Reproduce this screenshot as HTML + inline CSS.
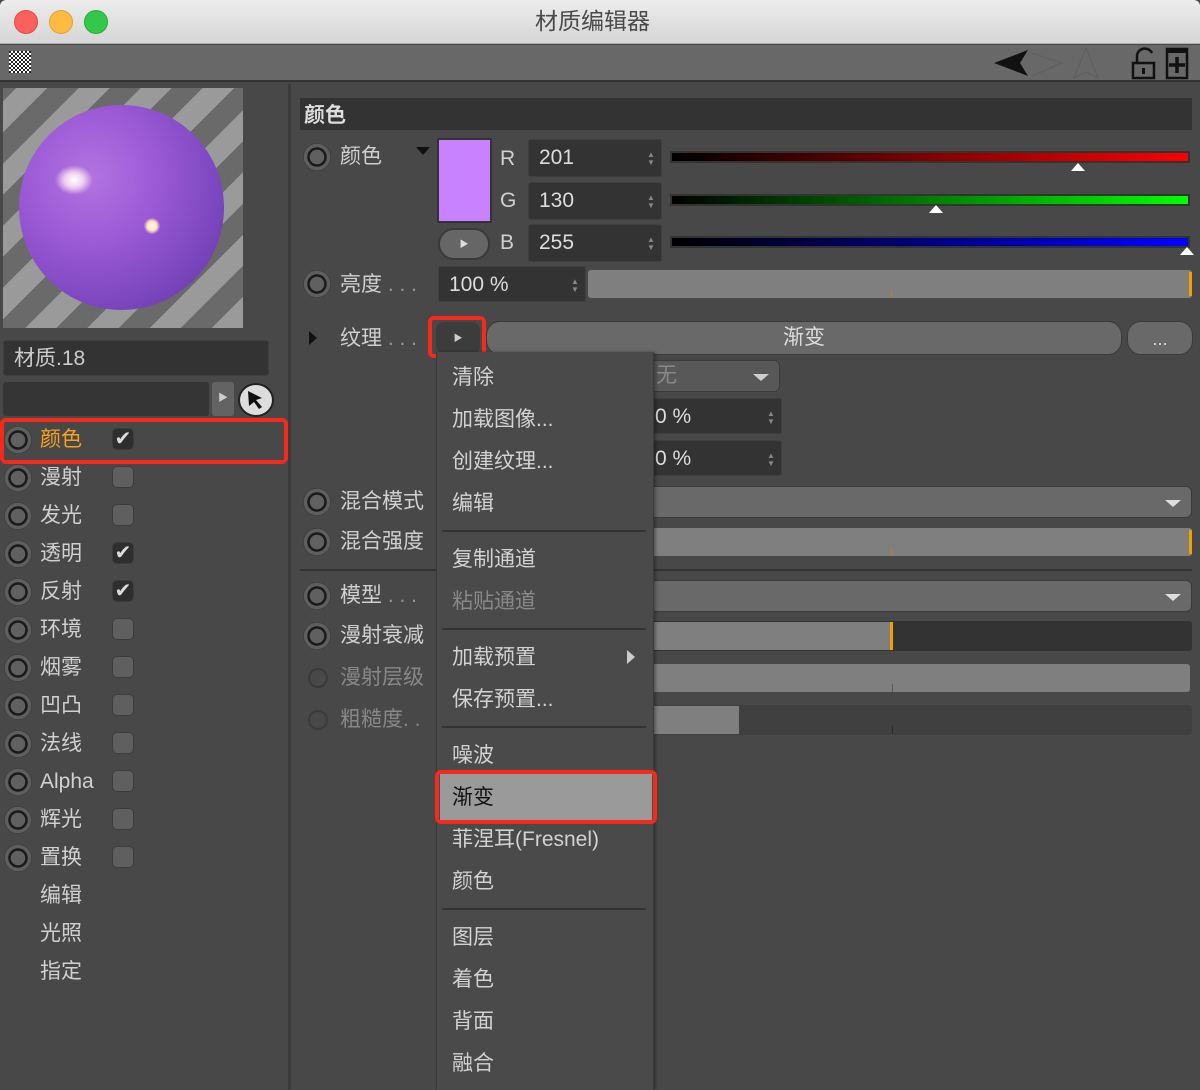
<!DOCTYPE html>
<html><head><meta charset="utf-8"><style>
*{margin:0;padding:0;box-sizing:border-box}
body{width:1200px;height:1090px;background:#484848;position:relative;overflow:hidden;font-family:"Liberation Sans","Noto Sans CJK SC",sans-serif;color:#d0d0d0}
.a{position:absolute}
.t{position:absolute;font-size:21px;line-height:24px;white-space:nowrap}
.rad{position:absolute;width:28px;height:28px;border-radius:50%;background:radial-gradient(circle at 50% 50%,#606060 0 7px,#1a1a1a 7.5px 9.5px,#5e5e5e 10px 13px,#3a3a3a 13.5px)}
.cb{position:absolute;width:22px;height:22px;border-radius:5px;background:#5f5f5f;border:1px solid #3c3c3c}
.cb.k{background:#2e2e2e;color:#ddd;font-size:20px;line-height:20px;text-align:center}
.fld{position:absolute;background:#333;border:1px solid #3e3e3e;border-radius:3px;font-size:21px;line-height:36px;padding-left:10px;color:#ddd}
.sp{position:absolute;right:6px;top:11px;width:8px;height:16px;color:#888;font-size:8px;line-height:8px}
.sld{position:absolute;background:#7f7f7f;border-radius:3px}
.dd{position:absolute;background:#696969;border-radius:6px;border:1px solid #3a3a3a}
.dd::after{content:"";position:absolute;right:10px;top:13px;border-left:8px solid transparent;border-right:8px solid transparent;border-top:7px solid #ddd}
.mi{position:absolute;left:452px;font-size:21px;line-height:24px;color:#d2d2d2}
.sep{position:absolute;left:442px;width:204px;height:2px;background:#333}
.red{position:absolute;border:4px solid #f42a1c;border-radius:6px}
</style></head><body>
<div class="a" style="left:0;top:0;width:1200px;height:44px;background:linear-gradient(#ececec,#d6d6d6);border-bottom:1px solid #b0b0b0;border-radius:6px 6px 0 0"></div>
<div class="a" style="left:14px;top:10px;width:24px;height:24px;border-radius:50%;background:#fc605c;border:1px solid #de4a44"></div>
<div class="a" style="left:49px;top:10px;width:24px;height:24px;border-radius:50%;background:#fdbc40;border:1px solid #dea236"></div>
<div class="a" style="left:84px;top:10px;width:24px;height:24px;border-radius:50%;background:#34c84a;border:1px solid #27aa35"></div>
<div class="t" style="left:535px;top:9px;font-size:23px;color:#4a4a4a">材质编辑器</div>
<div class="a" style="left:0;top:45px;width:1200px;height:37px;background:#686868;border-bottom:2px solid #333"></div>
<div class="a" style="left:9px;top:51px;width:22px;height:22px;background:repeating-conic-gradient(#fff 0 25%,#222 0 50%) 0 0/4px 4px"></div>
<svg class="a" style="left:990px;top:45px" width="210" height="37">
<path d="M4 18 L38 5 L30 18 L38 31 Z" fill="#111"/>
<path d="M42 8 L72 18 L42 31" fill="none" stroke="#5e5e5e" stroke-width="1"/>
<path d="M96 3 L108 33 L96 27 L84 33 Z" fill="none" stroke="#5e5e5e"/>
<rect x="143" y="18" width="21" height="15" fill="none" stroke="#111" stroke-width="2.5"/>
<path d="M147 18 V10 a8 8 0 0 1 15 -2" fill="none" stroke="#111" stroke-width="2.5"/>
<rect x="152" y="23" width="3" height="6" fill="#111"/>
<rect x="177" y="4" width="20" height="29" fill="none" stroke="#111" stroke-width="2.5"/>
<rect x="177" y="4" width="20" height="4" fill="#111"/>
<path d="M187 12 V28 M179 20 H195" stroke="#111" stroke-width="3.5"/>
</svg>
<div class="a" style="left:288px;top:84px;width:3px;height:1006px;background:#3a3a3a"></div>
<div class="a" style="left:3px;top:88px;width:240px;height:240px;background:repeating-linear-gradient(-45deg,#9a9a9a 0 22px,#6a6a6a 22px 44px)"></div>
<div class="a" style="left:19px;top:105px;width:205px;height:205px;border-radius:50%;background:radial-gradient(circle at 35% 35%,#b274e0 0,#9c5ad6 35%,#7a46bd 70%,#5c3596 100%)"></div>
<div class="a" style="left:55px;top:165px;width:38px;height:30px;border-radius:50%;background:radial-gradient(#fff 0,#f0d0f0 35%,rgba(200,140,230,0) 70%)"></div>
<div class="a" style="left:144px;top:218px;width:16px;height:16px;border-radius:50%;background:radial-gradient(#fff8e0 0,#ffe8c0 40%,rgba(200,140,230,0) 75%)"></div>
<div class="fld" style="left:3px;top:340px;width:266px;height:36px;color:#ccc">材质.18</div>
<div class="a" style="left:3px;top:382px;width:206px;height:34px;background:#353535;border-radius:3px"></div>
<div class="a" style="left:212px;top:382px;width:22px;height:34px;background:#636363;border-radius:3px;color:#ccc;font-size:10px;line-height:34px;text-align:center">▶</div>
<div class="a" style="left:238px;top:383px;width:36px;height:34px;border-radius:50%;background:#ddd;border:2px solid #222"></div>
<svg class="a" style="left:244px;top:388px" width="24" height="24"><path d="M4 3 L18 10 L12 12 L18 19 L15 21 L10 14 L5 18 Z" fill="#111"/></svg>
<div class="rad" style="left:4px;top:426px"></div><div class="t" style="left:40px;top:428px;color:#f7a21c">颜色</div><div class="cb k" style="left:112px;top:428px">✔</div>
<div class="red" style="left:0;top:418px;width:288px;height:46px"></div>
<div class="rad" style="left:4px;top:464px"></div><div class="t" style="left:40px;top:466px">漫射</div><div class="cb" style="left:112px;top:466px"></div>
<div class="rad" style="left:4px;top:502px"></div><div class="t" style="left:40px;top:504px">发光</div><div class="cb" style="left:112px;top:504px"></div>
<div class="rad" style="left:4px;top:540px"></div><div class="t" style="left:40px;top:542px">透明</div><div class="cb k" style="left:112px;top:542px">✔</div>
<div class="rad" style="left:4px;top:578px"></div><div class="t" style="left:40px;top:580px">反射</div><div class="cb k" style="left:112px;top:580px">✔</div>
<div class="rad" style="left:4px;top:616px"></div><div class="t" style="left:40px;top:618px">环境</div><div class="cb" style="left:112px;top:618px"></div>
<div class="rad" style="left:4px;top:654px"></div><div class="t" style="left:40px;top:656px">烟雾</div><div class="cb" style="left:112px;top:656px"></div>
<div class="rad" style="left:4px;top:692px"></div><div class="t" style="left:40px;top:694px">凹凸</div><div class="cb" style="left:112px;top:694px"></div>
<div class="rad" style="left:4px;top:730px"></div><div class="t" style="left:40px;top:732px">法线</div><div class="cb" style="left:112px;top:732px"></div>
<div class="rad" style="left:4px;top:768px"></div><div class="t" style="left:40px;top:770px">Alpha</div><div class="cb" style="left:112px;top:770px"></div>
<div class="rad" style="left:4px;top:806px"></div><div class="t" style="left:40px;top:808px">辉光</div><div class="cb" style="left:112px;top:808px"></div>
<div class="rad" style="left:4px;top:844px"></div><div class="t" style="left:40px;top:846px">置换</div><div class="cb" style="left:112px;top:846px"></div>
<div class="t" style="left:40px;top:884px">编辑</div>
<div class="t" style="left:40px;top:922px">光照</div>
<div class="t" style="left:40px;top:960px">指定</div>
<div class="a" style="left:300px;top:98px;width:892px;height:32px;background:#333"></div>
<div class="t" style="left:304px;top:104px;font-weight:bold;color:#ddd">颜色</div>
<div class="rad" style="left:303px;top:143px"></div><div class="t" style="left:340px;top:145px">颜色</div>
<div class="a" style="left:416px;top:147px;border-left:7px solid transparent;border-right:7px solid transparent;border-top:8px solid #111"></div>
<div class="a" style="left:437px;top:138px;width:55px;height:85px;background:#c982ff;border:2px solid #333"></div>
<div class="a" style="left:438px;top:228px;width:52px;height:32px;border-radius:16px;background:#666;border:2px solid #3a3a3a;color:#ddd;font-size:9px;line-height:28px;text-align:center">▶</div>
<div class="t" style="left:500px;top:147px">R</div><div class="t" style="left:500px;top:189px">G</div><div class="t" style="left:500px;top:231px">B</div>
<div class="fld" style="left:528px;top:139px;width:134px;height:38px">201<div class="sp">▲<br>▼</div></div>
<div class="fld" style="left:528px;top:182px;width:134px;height:38px">130<div class="sp">▲<br>▼</div></div>
<div class="fld" style="left:528px;top:224px;width:134px;height:38px">255<div class="sp">▲<br>▼</div></div>
<div class="a" style="left:670px;top:151px;width:520px;height:12px;background:linear-gradient(90deg,#000,#f00);border:2px solid #333"></div>
<div class="a" style="left:670px;top:194px;width:520px;height:12px;background:linear-gradient(90deg,#000,#0f0);border:2px solid #333"></div>
<div class="a" style="left:670px;top:236px;width:520px;height:12px;background:linear-gradient(90deg,#000,#00f);border:2px solid #333"></div>
<div class="a" style="left:1071px;top:163px;border-left:7px solid transparent;border-right:7px solid transparent;border-bottom:8px solid #fff"></div>
<div class="a" style="left:929px;top:205px;border-left:7px solid transparent;border-right:7px solid transparent;border-bottom:8px solid #fff"></div>
<div class="a" style="left:1180px;top:247px;border-left:7px solid transparent;border-right:7px solid transparent;border-bottom:8px solid #fff"></div>
<div class="rad" style="left:303px;top:270px"></div><div class="t" style="left:340px;top:273px">亮度 <span style="color:#999">. . .</span></div>
<div class="fld" style="left:438px;top:266px;width:148px;height:36px">100 %<div class="sp">▲<br>▼</div></div>
<div class="sld" style="left:588px;top:270px;width:604px;height:28px"><div class="a" style="right:0;top:2px;width:3px;height:24px;background:#f0a000"></div><div class="a" style="left:303px;top:20px;width:1px;height:7px;background:#c08020"></div></div>
<div class="a" style="left:309px;top:331px;border-top:7px solid transparent;border-bottom:7px solid transparent;border-left:8px solid #111"></div>
<div class="t" style="left:340px;top:327px">纹理 <span style="color:#999">. . .</span></div>
<div class="a" style="left:436px;top:322px;width:44px;height:32px;border-radius:8px;background:#3c3c3c;color:#ccc;font-size:9px;line-height:32px;text-align:center">▶</div>
<div class="red" style="left:428px;top:316px;width:58px;height:42px"></div>
<div class="a" style="left:486px;top:321px;width:636px;height:34px;border-radius:14px;background:#696969;border:1px solid #3a3a3a;text-align:center;font-size:21px;line-height:32px;color:#ddd">渐变</div>
<div class="a" style="left:1127px;top:321px;width:66px;height:34px;border-radius:14px;background:#696969;border:1px solid #3a3a3a;text-align:center;font-size:18px;line-height:34px;color:#ddd">...</div>
<div class="dd" style="left:600px;top:360px;width:180px;height:32px;background:#5a5a5a;opacity:.9"></div>
<div class="t" style="left:656px;top:364px;color:#888">无</div>
<div class="fld" style="left:600px;top:398px;width:182px;height:36px;padding-left:54px">0 %<div class="sp">▲<br>▼</div></div>
<div class="fld" style="left:600px;top:440px;width:182px;height:36px;padding-left:54px">0 %<div class="sp">▲<br>▼</div></div>
<div class="rad" style="left:303px;top:488px"></div><div class="t" style="left:340px;top:490px">混合模式</div>
<div class="dd" style="left:600px;top:486px;width:592px;height:32px"></div>
<div class="rad" style="left:303px;top:528px"></div><div class="t" style="left:340px;top:530px">混合强度</div>
<div class="sld" style="left:600px;top:528px;width:592px;height:28px"><div class="a" style="right:0;top:2px;width:3px;height:24px;background:#f0a000"></div><div class="a" style="left:291px;top:20px;width:1px;height:7px;background:#c08020"></div></div>
<div class="a" style="left:300px;top:569px;width:892px;height:2px;background:#333"></div>
<div class="rad" style="left:303px;top:582px"></div><div class="t" style="left:340px;top:584px">模型 <span style="color:#999">. . .</span></div>
<div class="dd" style="left:600px;top:580px;width:592px;height:32px"></div>
<div class="rad" style="left:303px;top:622px"></div><div class="t" style="left:340px;top:624px">漫射衰减</div>
<div class="a" style="left:600px;top:621px;width:592px;height:30px;background:#333;border-radius:3px"></div>
<div class="sld" style="left:600px;top:622px;width:293px;height:28px;border-radius:3px 0 0 3px"><div class="a" style="right:0;top:0;width:3px;height:28px;background:#f0a000"></div></div>
<div class="a" style="left:308px;top:668px;width:20px;height:20px;border-radius:50%;border:2px solid #3a3a3a"></div><div class="t" style="left:340px;top:666px;color:#888">漫射层级</div>
<div class="sld" style="left:600px;top:664px;width:590px;height:28px"><div class="a" style="left:292px;top:20px;width:1px;height:8px;background:#555"></div></div>
<div class="a" style="left:308px;top:710px;width:20px;height:20px;border-radius:50%;border:2px solid #3a3a3a"></div><div class="t" style="left:340px;top:708px;color:#888">粗糙度. .</div>
<div class="a" style="left:600px;top:705px;width:592px;height:30px;background:#404040;border-radius:3px"></div>
<div class="sld" style="left:600px;top:706px;width:139px;height:28px;border-radius:3px 0 0 3px"></div>
<div class="a" style="left:892px;top:726px;width:1px;height:8px;background:#2a2a2a"></div>
<div class="a" style="left:436px;top:352px;width:218px;height:738px;background:#4a4a4a;border-left:1px solid #3a3a3a;border-right:1px solid #3a3a3a;box-shadow:2px 0 3px rgba(0,0,0,.3)"></div>
<div class="mi" style="top:366px">清除</div>
<div class="mi" style="top:408px">加载图像...</div>
<div class="mi" style="top:450px">创建纹理...</div>
<div class="mi" style="top:492px">编辑</div>
<div class="sep" style="top:530px"></div>
<div class="mi" style="top:548px">复制通道</div>
<div class="mi" style="top:590px;color:#888">粘贴通道</div>
<div class="sep" style="top:628px"></div>
<div class="mi" style="top:646px">加载预置</div>
<div class="a" style="left:627px;top:650px;border-top:7px solid transparent;border-bottom:7px solid transparent;border-left:8px solid #ccc"></div>
<div class="mi" style="top:688px">保存预置...</div>
<div class="sep" style="top:726px"></div>
<div class="mi" style="top:744px">噪波</div>
<div class="a" style="left:440px;top:774px;width:212px;height:46px;background:#9a9a9a"></div>
<div class="mi" style="top:786px;color:#111">渐变</div>
<div class="red" style="left:435px;top:770px;width:222px;height:54px"></div>
<div class="mi" style="top:828px">菲涅耳(Fresnel)</div>
<div class="mi" style="top:870px">颜色</div>
<div class="sep" style="top:908px"></div>
<div class="mi" style="top:926px">图层</div>
<div class="mi" style="top:968px">着色</div>
<div class="mi" style="top:1010px">背面</div>
<div class="mi" style="top:1052px">融合</div>
</body></html>
